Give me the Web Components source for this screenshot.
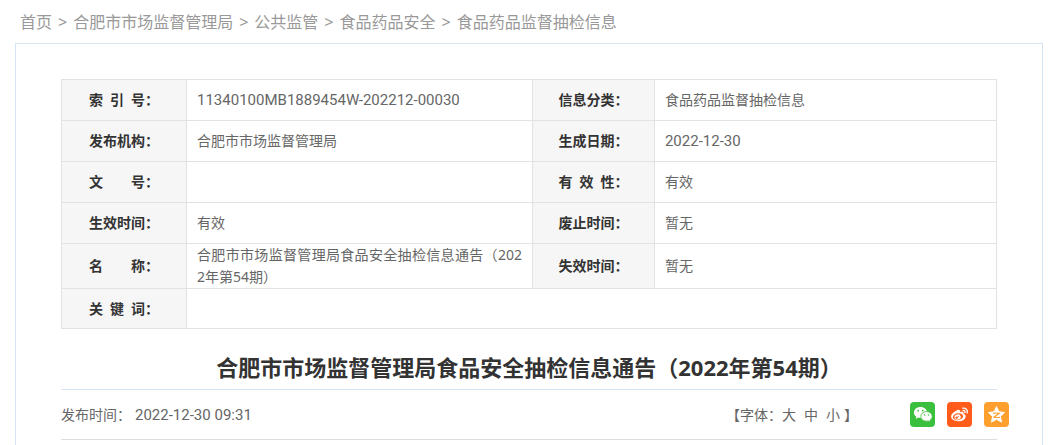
<!DOCTYPE html>
<html lang="zh-CN">
<head>
<meta charset="utf-8">
<title>合肥市市场监督管理局食品安全抽检信息通告（2022年第54期）</title>
<style>
  body {
    margin: 0;
    background: #fff;
    color: #666;
    font-family: "Noto Sans", "Noto Sans CJK SC", sans-serif;
    font-size: 14px;
    line-height: 22px;
  }
</style>
</head>
<body>

<notice-page>
  <bread-crumb slot="nav">
    <a href="#">首页</a>
    <a href="#">合肥市市场监督管理局</a>
    <a href="#">公共监管</a>
    <a href="#">食品药品安全</a>
    <a href="#">食品药品监督抽检信息</a>
  </bread-crumb>
  <index-table></index-table>
  <notice-title>合肥市市场监督管理局食品安全抽检信息通告（2022年第54期）</notice-title>
  <notice-meta>
    <span slot="date">2022-12-30 09:31</span>
    <font-size slot="tools"></font-size>
    <share-links slot="tools"></share-links>
  </notice-meta>
</notice-page>

<script>
class NoticePage extends HTMLElement {
  constructor () {
    super()
    this.shadow = this.attachShadow({ mode: 'open' })
    this.shadow.innerHTML =
    /*html*/`
      <style>
        :host {
          box-sizing: border-box;
          display: flex;
          flex-direction: column;
          min-height: 100vh;
          padding: 0 10px 0 15px;
        }

        main {
          flex: 1;
          border: 1px solid #d5e5f5;
          border-bottom: none;
          padding: 35px 45px 0;
        }
      </style>
      <slot name="nav"></slot>
      <main><slot></slot></main>
    `
  }
}

class BreadCrumb extends HTMLElement {
  constructor () {
    super()
    this.shadow = this.attachShadow({ mode: 'open' })
  }

  connectedCallback () {
    this.render()
  }

  render () {
    const links = [...this.querySelectorAll('a')]
    this.shadow.innerHTML =
    /*html*/`
      <style>
        :host {
          display: block;
          padding: 2px 5px 0;
          color: #999;
          font-size: 16px;
          line-height: 41px;
        }

        nav {
          display: flex;
          gap: 6px;
        }

        a {
          color: inherit;
          text-decoration: none;
        }
      </style>
      <nav aria-label="当前位置">
        ${links.map(link => `<a href="${link.getAttribute('href')}">${link.textContent}</a>`).join('<span>&gt;</span>')}
      </nav>
    `
  }
}

class IndexTable extends HTMLElement {
  constructor () {
    super()
    this.shadow = this.attachShadow({ mode: 'open' })
    this.data = []
  }

  connectedCallback () {
    this.loadData()
    this.render()
  }

  loadData () {
    this.data = [
      [['索&ensp;引&ensp;号', '11340100MB1889454W-202212-00030'], ['信息分类', '食品药品监督抽检信息']],
      [['发布机构', '合肥市市场监督管理局'], ['生成日期', '2022-12-30']],
      [['文&emsp;&emsp;号', ''], ['有&ensp;效&ensp;性', '有效']],
      [['生效时间', '有效'], ['废止时间', '暂无']],
      [['名&emsp;&emsp;称', '合肥市市场监督管理局食品安全抽检信息通告（2022年第54期）'], ['失效时间', '暂无']],
      [['关&ensp;键&ensp;词', '']]
    ]
  }

  cell ([label, value], span) {
    // codes and dates are set a little larger than the Chinese text
    const latin = /^[\w-]+$/.test(value) ? 'latin' : ''
    return `<th scope="row">${label}：</th><td class="${latin}" colspan="${span}">${value}</td>`
  }

  render () {
    this.shadow.innerHTML =
    /*html*/`
      <style>
        :host {
          display: block;
        }

        table {
          width: 100%;
          table-layout: fixed;
          border-collapse: collapse;
        }

        .label-first {
          width: 125px;
        }

        .label-second {
          width: 122px;
        }

        .value-first {
          width: 37%;
        }

        tr {
          height: 41px;
        }

        tr:last-child {
          height: 40px;
        }

        th, td {
          border: 1px solid #e2e2e2;
        }

        th {
          padding: 0;
          background: #f6f6f6;
          color: #333;
          font-weight: 700;
          text-align: center;
        }

        td {
          padding: 0 10px;
          text-align: justify;
          word-break: break-all;
        }

        .latin {
          font-family: Roboto, "Noto Sans CJK SC", sans-serif;
          font-size: 15px;
        }
      </style>
      <table>
        <colgroup>
          <col class="label-first"><col class="value-first"><col class="label-second"><col>
        </colgroup>
        <tbody>
          ${this.data.map(row => `<tr>${row.map(item => this.cell(item, row.length === 1 ? 3 : 1)).join('')}</tr>`).join('')}
        </tbody>
      </table>
    `
  }
}

class NoticeTitle extends HTMLElement {
  constructor () {
    super()
    this.shadow = this.attachShadow({ mode: 'open' })
    this.shadow.innerHTML =
    /*html*/`
      <style>
        :host {
          display: block;
          padding: 18px 0 2px;
          border-bottom: 1px solid #d5e5f5;
        }

        h1 {
          margin: 0;
          color: #333;
          font-size: 22px;
          line-height: 40px;
          text-align: center;
        }
      </style>
      <h1><slot></slot></h1>
    `
  }
}

class NoticeMeta extends HTMLElement {
  constructor () {
    super()
    this.shadow = this.attachShadow({ mode: 'open' })
    this.shadow.innerHTML =
    /*html*/`
      <style>
        :host {
          display: flex;
          align-items: center;
          justify-content: space-between;
          height: 49px;
          border-bottom: 1px solid #ddd;
        }

        .published, .tools {
          display: flex;
          align-items: center;
        }

        .published {
          gap: 4px;
        }

        .tools {
          gap: 52px;
          margin-right: -12px;
        }

        ::slotted([slot="date"]) {
          font-family: Roboto, "Noto Sans CJK SC", sans-serif;
          font-size: 15px;
        }
      </style>
      <div class="published"><span>发布时间：</span><slot name="date"></slot></div>
      <div class="tools"><slot name="tools"></slot></div>
    `
  }
}

class FontSize extends HTMLElement {
  constructor () {
    super()
    this.shadow = this.attachShadow({ mode: 'open' })
    this.shadow.innerHTML =
    /*html*/`
      <style>
        :host {
          display: flex;
        }

        .sizes {
          display: flex;
          gap: 8px;
          padding-right: 4px;
        }

        button {
          padding: 0;
          border: none;
          background: none;
          color: inherit;
          font: inherit;
          cursor: pointer;
        }
      </style>
      <span>【字体：</span>
      <span class="sizes"><button type="button">大</button><button type="button">中</button><button type="button">小</button></span>
      <span>】</span>
    `
  }
}

class ShareLinks extends HTMLElement {
  constructor () {
    super()
    this.shadow = this.attachShadow({ mode: 'open' })
    this.shadow.innerHTML =
    /*html*/`
      <style>
        :host {
          display: flex;
          gap: 12px;
        }

        a {
          width: 25px;
          height: 25px;
          border-radius: 4px;
        }

        svg {
          display: block;
        }

        .wechat {
          background: #3abf3e;
        }

        .weibo {
          background: #ff5c1c;
        }

        .qzone {
          background: #ff9f2e;
        }
      </style>
      <a class="wechat" href="#" aria-label="微信">
        <svg width="25" height="25" viewBox="0 0 25 25">
          <path fill="#fff" d="M10.500 5C6.700 5 3.900 7.400 3.900 10.500c0 1.800.9 3.300 2.500 4.300l-.7 2.100 2.500-1.300c.8.2 1.500.3 2.300.3 3.700 0 6.700-2.400 6.700-5.400S14.200 5 10.500 5z"/>
          <path fill="#fff" stroke="#3abf3e" stroke-width=".8" d="M16.500 9.600c-3.200 0-5.700 2.100-5.700 4.800s2.500 4.800 5.700 4.800c.7 0 1.300-.1 1.900-.3l2.200 1.200-.6-1.900c1.400-.9 2.200-2.200 2.200-3.800 0-2.700-2.500-4.800-5.700-4.800z"/>
          <g fill="#3abf3e">
            <circle cx="8.200" cy="8.600" r=".9"/><circle cx="12.800" cy="8.600" r=".9"/>
            <circle cx="14.600" cy="13" r=".8"/><circle cx="18.400" cy="13" r=".8"/>
          </g>
        </svg>
      </a>
      <a class="weibo" href="#" aria-label="微博">
        <svg width="25" height="25" viewBox="0 0 25 25">
          <path fill="#fff" d="M10.600 8c1.600-.7 3 .1 2.500 2 1.900-.7 4-.5 3.600 1.500-.1.500 0 .6.500.8 1 .4 1.500 1.100 1.500 2.100 0 2.500-3.300 4.900-7.400 4.900-4 0-7.200-1.800-7.200-4.700C4.100 12 7.400 9.200 10.600 8z"/>
          <ellipse cx="11" cy="14.700" rx="5.100" ry="3.400" fill="#ff5c1c" transform="rotate(-8 11 14.700)"/>
          <ellipse cx="10.600" cy="15" rx="3.200" ry="2.700" fill="#fff" transform="rotate(-15 10.600 15)"/>
          <circle cx="9.700" cy="15.600" r="1.200" fill="#ff5c1c"/><circle cx="11.700" cy="14.500" r=".5" fill="#ff5c1c"/>
          <path fill="none" stroke="#fff" stroke-width="1.300" stroke-linecap="round" d="M15.800 6.100c3-.5 5.200 2 4.300 5M16.200 8.500c1.300-.2 2.200.8 1.800 2.100"/>
        </svg>
      </a>
      <a class="qzone" href="#" aria-label="QQ空间">
        <svg width="25" height="25" viewBox="0 0 25 25">
          <path fill="#fff" stroke="#fff" stroke-linejoin="round" d="M12.500 4.600l2.400 5.200 5.700.7-4.200 3.900 1.100 5.700-5-2.800-5 2.800 1.100-5.700-4.200-3.900 5.700-.7z"/>
          <path fill="none" stroke="#ff9f2e" stroke-width="1.200" d="M9.200 11.300c2-.4 4-.4 6 0l-5.200 3.900c2 .4 3.900.4 5.900.1"/>
        </svg>
      </a>
    `
  }
}

customElements.define('notice-page', NoticePage)
customElements.define('bread-crumb', BreadCrumb)
customElements.define('index-table', IndexTable)
customElements.define('notice-title', NoticeTitle)
customElements.define('notice-meta', NoticeMeta)
customElements.define('font-size', FontSize)
customElements.define('share-links', ShareLinks)
</script>
</body>
</html>
